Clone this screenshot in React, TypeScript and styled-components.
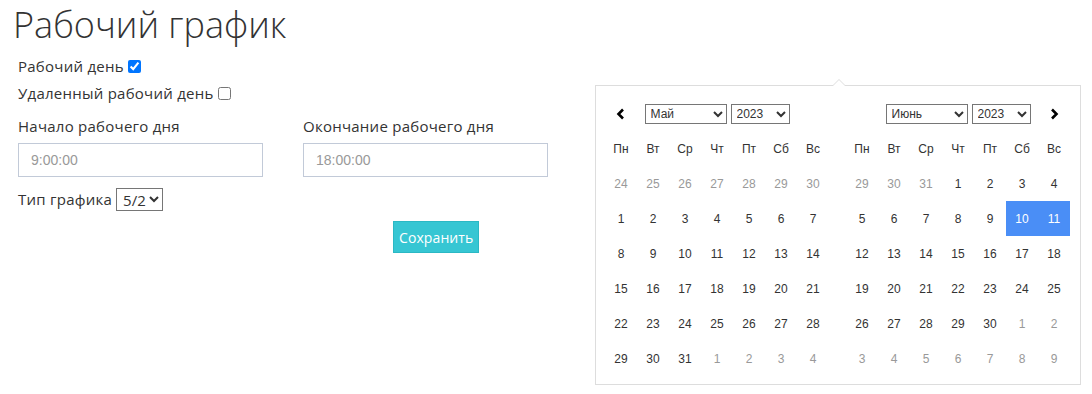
import React from "react";
import styled, { createGlobalStyle } from "styled-components";

const GlobalStyle = createGlobalStyle`
  html, body { margin: 0; padding: 0; background: #fff; }
  body { font-family: "Open Sans", "Liberation Sans", sans-serif; color: #333; font-size: 15px; }
  * { box-sizing: border-box; }
`;

const Page = styled.div`
  position: relative;
  width: 1092px;
  height: 394px;
  overflow: hidden;
`;

const Title = styled.h1`
  margin: 0;
  padding-left: 13px;
  font-family: "Open Sans", sans-serif;
  font-weight: 300;
  font-size: 36px;
  line-height: normal;
  color: #333;
`;

const Form = styled.div`
  padding-left: 18px;
  width: 560px;
  display: flex;
  flex-direction: column;
  letter-spacing: 0.25px;
`;

const CheckRow = styled.label<{ $first?: boolean }>`
  display: flex;
  align-items: center;
  height: 27px;
  font-size: 15px;
  line-height: 27px;
  margin-top: ${(p) => (p.$first ? "4px" : "0")};
`;

const Check = styled.input`
  margin: 0 0 0 4px;
  width: 13px;
  height: 13px;
`;

const FieldGrid = styled.div`
  display: grid;
  grid-template-columns: 245px 245px;
  column-gap: 40px;
  margin-top: 8px;
`;

const Field = styled.div`
  display: flex;
  flex-direction: column;
`;

const FieldLabel = styled.div`
  font-size: 15px;
  line-height: 22px;
  margin-bottom: 6px;
`;

const TextInput = styled.input`
  height: 34px;
  width: 245px;
  border: 1px solid #c2cad8;
  border-radius: 0;
  padding: 0 12px;
  font-family: "Liberation Sans", Arial, sans-serif;
  font-size: 14px;
  letter-spacing: 0;
  color: #555;
  outline: none;
  &::placeholder { color: #999; }
`;

const TypeRow = styled.div`
  display: flex;
  align-items: center;
  margin-top: 10px;
  font-size: 15px;
  height: 24px;
`;

const TypeSelect = styled.select`
  margin-left: 4px;
  height: 23px;
  width: 47px;
  font-family: "Open Sans", sans-serif;
  font-size: 15px;
  color: #333;
  border: 1px solid #767676;
  border-radius: 0;
  background: #fff;
  padding: 0 0 0 2px;
`;

const ButtonRow = styled.div`
  display: flex;
  padding-left: 375px;
  margin-top: 10px;
`;

const SaveButton = styled.button`
  height: 32px;
  padding: 0 5px;
  background: #36c6d3;
  color: #fff;
  border: 1px solid #2bb8c4;
  border-radius: 0;
  font-family: "Open Sans", sans-serif;
  font-size: 14px;
  letter-spacing: 0.1px;
  cursor: pointer;
`;

const Popup = styled.div`
  position: absolute;
  left: 595px;
  top: 85px;
  width: 486px;
  height: 300px;
  background: #fff;
  border: 1px solid #ddd;
  padding: 10px 10px 8px 9px;
  display: flex;
  gap: 17px;
  font-family: "Liberation Sans", Arial, sans-serif;
  font-size: 12px;
  &::before {
    content: "";
    position: absolute;
    top: -7px;
    left: 236px;
    border-left: 7px solid transparent;
    border-right: 7px solid transparent;
    border-bottom: 7px solid #ddd;
  }
  &::after {
    content: "";
    position: absolute;
    top: -6px;
    left: 237px;
    border-left: 6px solid transparent;
    border-right: 6px solid transparent;
    border-bottom: 6px solid #fff;
  }
`;

const Calendar = styled.div`
  width: 224px;
  display: grid;
  grid-template-columns: repeat(7, 32px);
  grid-auto-rows: 35px;
`;

const NavCell = styled.div`
  display: flex;
  align-items: center;
  justify-content: center;
  cursor: pointer;
`;

const MonthCell = styled.div`
  grid-column: span 5;
  display: flex;
  align-items: center;
  justify-content: center;
  gap: 4px;
`;

const SmallSelect = styled.select<{ $w: number }>`
  width: ${(p) => p.$w}px;
  height: 20px;
  font-family: "Liberation Sans", Arial, sans-serif;
  font-size: 12px;
  color: #333;
  border: 1px solid #767676;
  border-radius: 0;
  background: #fff;
  padding: 0 0 0 1px;
`;

const DayName = styled.div`
  display: flex;
  align-items: center;
  justify-content: center;
  color: #333;
`;

const DayCell = styled.div<{ $off?: boolean; $active?: boolean }>`
  display: flex;
  align-items: center;
  justify-content: center;
  color: ${(p) => (p.$active ? "#fff" : p.$off ? "#999" : "#333")};
  background: ${(p) => (p.$active ? "#4a8ef6" : "transparent")};
`;

const Chevron = ({ dir }: { dir: "left" | "right" }) => (
  <svg width="10" height="12" viewBox="0 0 10 12">
    <polyline
      points={dir === "left" ? "7,1.5 2.5,6 7,10.5" : "3,1.5 7.5,6 3,10.5"}
      fill="none"
      stroke="#000"
      strokeWidth="2.6"
    />
  </svg>
);

const MONTHS = ["Январь", "Февраль", "Март", "Апрель", "Май", "Июнь", "Июль", "Август", "Сентябрь", "Октябрь", "Ноябрь", "Декабрь"];
const DAYS = ["Пн", "Вт", "Ср", "Чт", "Пт", "Сб", "Вс"];

function buildDays(year: number, month: number) {
  const first = new Date(year, month, 1);
  const offset = (first.getDay() + 6) % 7;
  const start = new Date(year, month, 1 - (offset === 0 ? 7 : offset));
  const cells: { d: number; off: boolean; key: string }[] = [];
  for (let i = 0; i < 42; i++) {
    const dt = new Date(start.getFullYear(), start.getMonth(), start.getDate() + i);
    cells.push({ d: dt.getDate(), off: dt.getMonth() !== month, key: `${dt.getMonth()}-${dt.getDate()}` });
  }
  return cells;
}

const CalendarView = ({ month, prev, next, active }: { month: number; prev?: boolean; next?: boolean; active: number[] }) => {
  const cells = buildDays(2023, month);
  return (
    <Calendar>
      <NavCell>{prev && <Chevron dir="left" />}</NavCell>
      <MonthCell>
        <SmallSelect $w={82} defaultValue={month}>
          {MONTHS.map((m, i) => (
            <option key={m} value={i}>{m}</option>
          ))}
        </SmallSelect>
        <SmallSelect $w={59} defaultValue="2023">
          <option value="2023">2023</option>
        </SmallSelect>
      </MonthCell>
      <NavCell>{next && <Chevron dir="right" />}</NavCell>
      {DAYS.map((d) => (
        <DayName key={d}>{d}</DayName>
      ))}
      {cells.map((c) => (
        <DayCell key={c.key} $off={c.off} $active={!c.off && active.includes(c.d)}>
          {c.d}
        </DayCell>
      ))}
    </Calendar>
  );
};

export default function App() {
  return (
    <Page>
      <GlobalStyle />
      <Title>Рабочий график</Title>
      <Form>
        <CheckRow $first>
          Рабочий день
          <Check type="checkbox" defaultChecked />
        </CheckRow>
        <CheckRow>
          Удаленный рабочий день
          <Check type="checkbox" />
        </CheckRow>
        <FieldGrid>
          <Field>
            <FieldLabel>Начало рабочего дня</FieldLabel>
            <TextInput placeholder="9:00:00" />
          </Field>
          <Field>
            <FieldLabel>Окончание рабочего дня</FieldLabel>
            <TextInput placeholder="18:00:00" />
          </Field>
        </FieldGrid>
        <TypeRow>
          Тип графика
          <TypeSelect defaultValue="5/2">
            <option value="5/2">5/2</option>
            <option value="2/2">2/2</option>
          </TypeSelect>
        </TypeRow>
        <ButtonRow>
          <SaveButton>Сохранить</SaveButton>
        </ButtonRow>
      </Form>
      <Popup>
        <CalendarView month={4} prev active={[]} />
        <CalendarView month={5} next active={[10, 11]} />
      </Popup>
    </Page>
  );
}
